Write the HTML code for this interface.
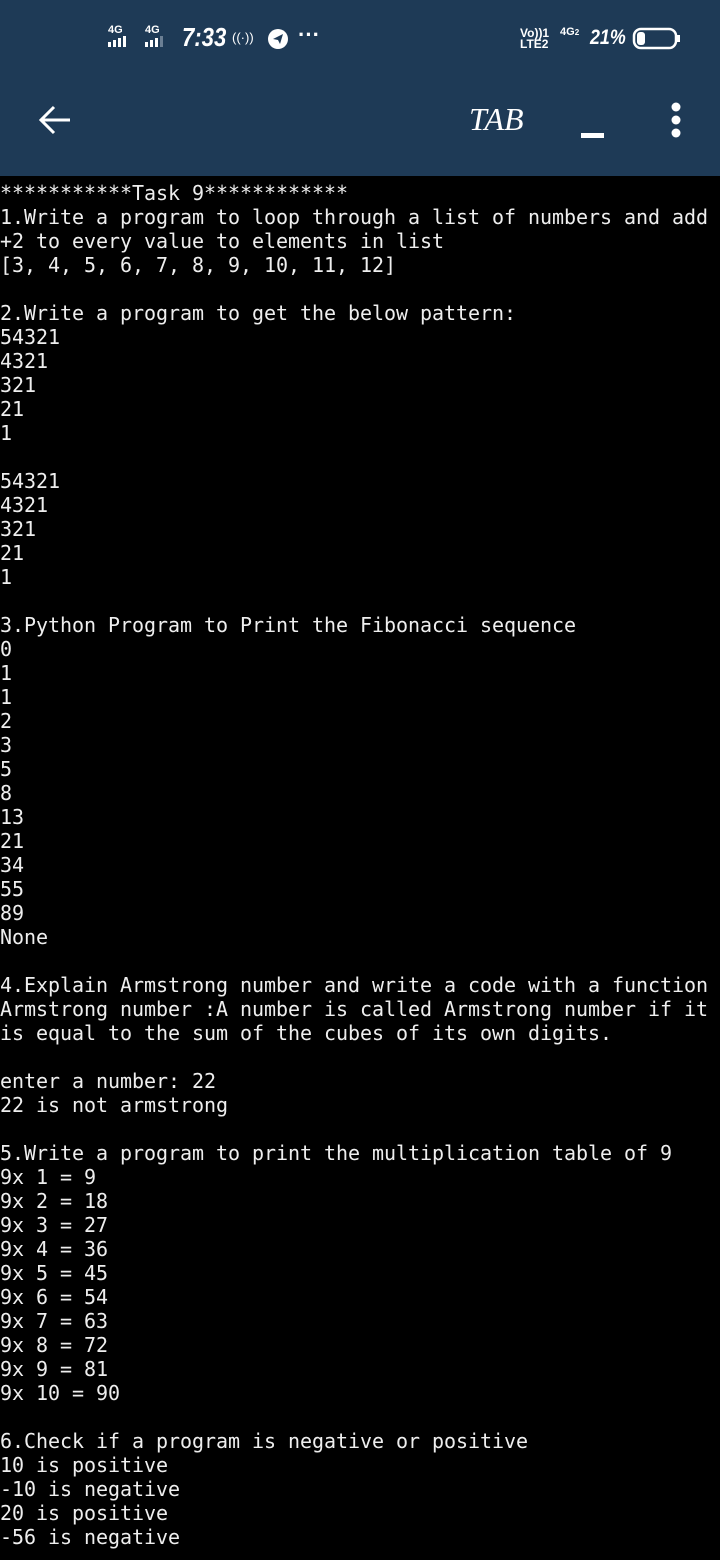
<!DOCTYPE html>
<html><head><meta charset="utf-8"><style>
html,body{margin:0;padding:0;background:#000;width:720px;height:1560px;overflow:hidden}
.hdr{position:absolute;left:0;top:0;width:720px;height:176px;background:#1e3a56;color:#fff;font-family:"Liberation Sans",sans-serif}
pre{position:absolute;left:0;top:181px;margin:0;font-family:"DejaVu Sans Mono","Liberation Mono",monospace;font-size:20px;line-height:24px;color:#eee;letter-spacing:-0.04px}
.tab{position:absolute;left:469px;top:101px;font-family:"Liberation Serif",serif;font-style:italic;font-size:32px;color:#fff}
.time{position:absolute;left:182px;top:22px;font-style:italic;font-size:26px;font-weight:bold;transform:scaleX(.85);transform-origin:left}
.pct{position:absolute;left:590px;top:26px;font-style:italic;font-size:21px;font-weight:bold;transform:scaleX(.85);transform-origin:left}
.sm{position:absolute;font-size:11px;font-weight:bold;line-height:11px}
</style></head><body>
<div class="hdr">
<div class="sm" style="left:108px;top:25px">4G</div>
<div class="sm" style="left:145px;top:25px">4G</div>
<svg style="position:absolute;left:108px;top:36px" width="70" height="12"><g fill="#fff"><rect x="0" y="6" width="3" height="5"/><rect x="5" y="4" width="3" height="7"/><rect x="10" y="2" width="3" height="9"/><rect x="15" y="0" width="3" height="11"/><rect x="37" y="6" width="3" height="5"/><rect x="42" y="4" width="3" height="7"/><rect x="47" y="2" width="3" height="9"/></g><rect x="52" y="0" width="3" height="11" fill="#6b7f94"/></svg>
<div class="time">7:33</div>
<div style="position:absolute;left:232px;top:30px;font-size:13px">((·))</div>
<svg style="position:absolute;left:267px;top:28px" width="22" height="22"><circle cx="11" cy="11" r="10" fill="#fff"/><path d="M6 11 L16 6 L13 16 L11 12 Z" fill="#1e3a56"/></svg>
<div style="position:absolute;left:298px;top:22px;font-size:22px;font-weight:bold">···</div>
<div class="sm" style="left:520px;top:28px;font-size:12px">Vo))1<br>LTE2</div>
<div class="sm" style="left:560px;top:27px">4G<span style="font-size:8px">2</span></div>
<div class="pct">21%</div>
<svg style="position:absolute;left:632px;top:27px" width="50" height="24"><rect x="2" y="2" width="42" height="19" rx="7" fill="none" stroke="#fff" stroke-width="2.5"/><rect x="5" y="5" width="8" height="13" rx="3" fill="#fff"/><rect x="45" y="8" width="3" height="7" fill="#fff"/></svg>
<svg style="position:absolute;left:38px;top:104px" width="36" height="32"><path d="M32 16 H4 M16 3 L3 16 L16 29" stroke="#fff" stroke-width="3" fill="none"/></svg>
<div class="tab">TAB</div>
<div style="position:absolute;left:581px;top:133px;width:23px;height:5px;background:#fff"></div>
<svg style="position:absolute;left:667px;top:102px" width="18" height="36"><circle cx="9" cy="5" r="4.5" fill="#fff"/><circle cx="9" cy="18" r="4.5" fill="#fff"/><circle cx="9" cy="31" r="4.5" fill="#fff"/></svg>
</div>
<pre>***********Task 9************
1.Write a program to loop through a list of numbers and add
+2 to every value to elements in list
[3, 4, 5, 6, 7, 8, 9, 10, 11, 12]

2.Write a program to get the below pattern:
54321
4321
321
21
1

54321
4321
321
21
1

3.Python Program to Print the Fibonacci sequence
0
1
1
2
3
5
8
13
21
34
55
89
None

4.Explain Armstrong number and write a code with a function
Armstrong number :A number is called Armstrong number if it
is equal to the sum of the cubes of its own digits.

enter a number: 22
22 is not armstrong

5.Write a program to print the multiplication table of 9
9x 1 = 9
9x 2 = 18
9x 3 = 27
9x 4 = 36
9x 5 = 45
9x 6 = 54
9x 7 = 63
9x 8 = 72
9x 9 = 81
9x 10 = 90

6.Check if a program is negative or positive
10 is positive
-10 is negative
20 is positive
-56 is negative</pre>
</body></html>
